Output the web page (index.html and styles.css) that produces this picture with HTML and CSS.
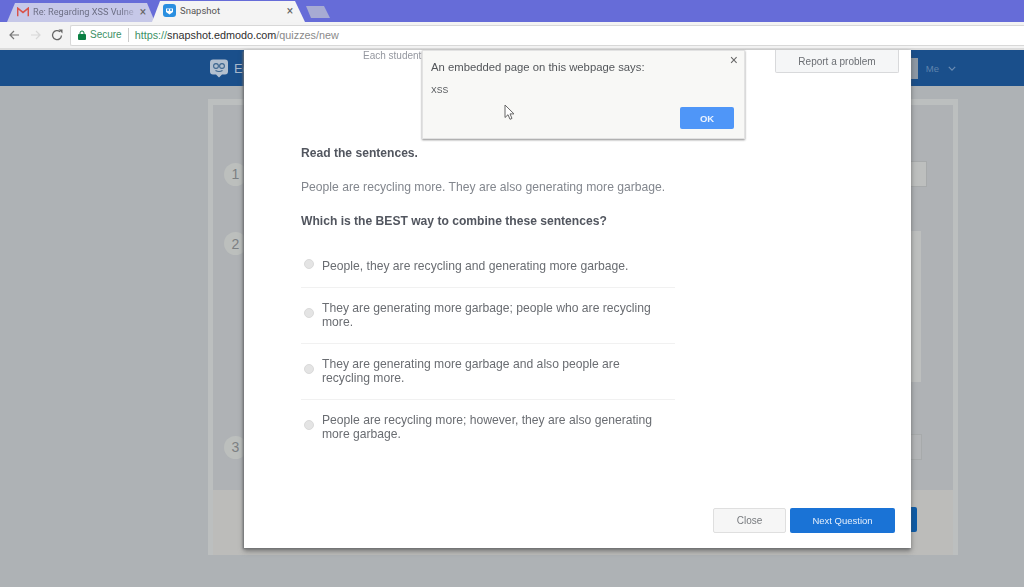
FILE: index.html
```html
<!DOCTYPE html>
<html lang="en">
<head>
<meta charset="utf-8">
<title>Snapshot</title>
<link rel="stylesheet" href="styles.css">
</head>
<body>
<div class="frame">
  <div class="tabs">
    <div class="tab tab-mail">
      <svg class="fav" viewBox="0 0 14 11" width="12" height="10"><path d="M0.8 10.500V1L7 6l6.200-5v9.500" fill="none" stroke="#d9534a" stroke-width="1.800"/></svg>
      <span class="tab-title">Re: Regarding XSS Vulne</span>
      <span class="tab-x">×</span>
    </div>
    <div class="tab tab-active">
      <svg class="fav" viewBox="0 0 13 13" width="13" height="13"><rect width="13" height="13" rx="3" fill="#2a8fe0"/><path d="M3 4.500h7v3.500l-3.500 2.500L3 8z" fill="#fff"/><circle cx="5" cy="6" r="1" fill="#2a8fe0"/><circle cx="8" cy="6" r="1" fill="#2a8fe0"/></svg>
      <span class="tab-title">Snapshot</span>
      <span class="tab-x">×</span>
    </div>
    <div class="tab-new"></div>
  </div>
  <div class="toolbar">
    <svg class="nav" viewBox="0 0 12 12" width="12" height="12"><path d="M11 6H2M6 2L2 6l4 4" fill="none" stroke="#777" stroke-width="1.200"/></svg>
    <svg class="nav" viewBox="0 0 12 12" width="12" height="12"><path d="M1 6h9M6 2l4 4-4 4" fill="none" stroke="#d8d8d8" stroke-width="1.200"/></svg>
    <svg class="nav" viewBox="0 0 12 12" width="12" height="12"><path d="M10.500 6.500A4.500 4.500 0 1 1 9 2.800" fill="none" stroke="#666" stroke-width="1.300"/><path d="M7.500 0.500h4v4z" fill="#666"/></svg>
    <div class="urlbar">
      <svg class="lock" viewBox="0 0 8 10" width="8" height="10"><path d="M2 4.500V3a2 2 0 0 1 4 0v1.500" fill="none" stroke="#0b8043" stroke-width="1"/><rect y="4" width="8" height="6" rx="1" fill="#0b8043"/></svg>
      <span class="secure">Secure</span>
      <span class="url"><span class="url-scheme">https://</span>snapshot.edmodo.com<span class="url-path">/quizzes/new</span></span>
    </div>
  </div>
  <div class="page">
    <header class="site-header">
      <div class="brand">
        <svg viewBox="0 0 20 20" width="20" height="21"><path d="M4 1h12a3 3 0 0 1 3 3v9a3 3 0 0 1-3 3h-3l-3 3-3-3H4a3 3 0 0 1-3-3V4a3 3 0 0 1 3-3z" fill="#b3c0cf"/><circle cx="7" cy="7.500" r="2.400" fill="none" stroke="#3d668f" stroke-width="1.100"/><circle cx="13" cy="7.500" r="2.400" fill="none" stroke="#3d668f" stroke-width="1.100"/><path d="M6.500 12q3.500 2 7 0" fill="none" stroke="#3d668f" stroke-width="1.100"/></svg>
        <span class="brand-name">Edmodo</span>
      </div>
      <div class="account">
        <span class="avatar"></span>
        <span class="me">Me</span>
        <svg viewBox="0 0 10 6" width="8" height="5"><path d="M1 1l4 4 4-4" fill="none" stroke="#6c8db3" stroke-width="1.500"/></svg>
      </div>
    </header>
    <main class="card">
      <div class="panel">
        <div class="step step-one"><span class="num">1</span><span class="field"></span></div>
        <div class="step step-two"><span class="num">2</span><span class="field field-tall"></span></div>
        <div class="step step-three"><span class="num">3</span><span class="field field-outline"></span></div>
      </div>
      <div class="card-foot"><span class="foot-btn"></span></div>
    </main>

    <section class="modal">
      <div class="modal-top">
        <span class="each">Each student</span>
        <button class="report">Report a problem</button>
      </div>
      <div class="quiz">
        <p class="q-strong">Read the sentences.</p>
        <p class="q-text">People are recycling more. They are also generating more garbage.</p>
        <p class="q-strong q-ask">Which is the BEST way to combine these sentences?</p>
        <ul class="options">
          <li class="option option-first"><span class="radio"></span><span class="opt-text">People, they are recycling and generating more garbage.</span></li>
          <li class="option"><span class="radio"></span><span class="opt-text">They are generating more garbage; people who are recycling more.</span></li>
          <li class="option"><span class="radio"></span><span class="opt-text">They are generating more garbage and also people are recycling more.</span></li>
          <li class="option"><span class="radio"></span><span class="opt-text">People are recycling more; however, they are also generating more garbage.</span></li>
        </ul>
      </div>
      <div class="modal-foot">
        <button class="btn-close">Close</button>
        <button class="btn-next">Next Question</button>
      </div>
    </section>

    <section class="alert">
      <span class="alert-x">×</span>
      <p class="alert-title">An embedded page on this webpage says:</p>
      <p class="alert-msg">XSS</p>
      <div class="alert-foot"><button class="alert-ok">OK</button></div>
    </section>
    <svg class="cursor" viewBox="0 0 12 18" width="12" height="18"><path d="M1 1v12.500l3-2.800 2 4.600 2-.9-2-4.500h4z" fill="#fff" stroke="#666" stroke-width="1"/></svg>
  </div>
</div>
</body>
</html>
```
FILE: styles.css
```css
* { box-sizing: border-box; }
html, body { margin: 0; height: 100%; overflow: hidden; }
body { font-family: "Liberation Sans", Arial, sans-serif; background: #aeb2b5; }
p { margin: 0; }
button { font-family: inherit; cursor: default; }

.frame { width: 1024px; height: 587px; display: flex; flex-direction: column; filter: blur(0.55px); }

.tabs { height: 22px; flex: none; background: #666cd8; display: flex; align-items: flex-end; position: relative; padding-left: 7px; }
.tab { display: flex; align-items: center; font-family: Roboto, "Liberation Sans", sans-serif; font-size: 9.500px; color: #555; }
.tab-mail { width: 148px; height: 19px; background: #c6c8e8; padding: 0 0 2px 10px; clip-path: polygon(0 100%, 8px 0, 140px 0, 148px 100%); color: #6d6f85; font-size: 9.200px; }
.tab-active { width: 153px; height: 21px; margin-left: -3px; background: #f4f4f4; padding: 0 9px 2px 11px; clip-path: polygon(0 100%, 8px 0, 143px 0, 153px 100%); }
.fav { flex: none; margin-right: 4px; }
.tab-title { white-space: nowrap; flex: 1; }
.tab-mail .tab-title { -webkit-mask-image: linear-gradient(90deg, #000 85%, transparent 102%); mask-image: linear-gradient(90deg, #000 85%, transparent 102%); }
.tab-mail .tab-x { margin-right: 6px; }
.tab-x { font-size: 12px; line-height: 12px; color: #666; width: 12px; text-align: center; flex: none; }
.tab-new { width: 24px; height: 12px; margin: 0 0 4px 1px; background: #a7abd3; clip-path: polygon(0 0, 18px 0, 24px 100%, 5px 100%); }

.toolbar { height: 28px; flex: none; background: #f3f3f3; border-bottom: 2px solid #dcdcdc; display: flex; align-items: center; padding-left: 8px; }
.nav { flex: none; margin-right: 10px; }
.nav:nth-child(2) { margin-right: 9px; }
.nav:nth-child(3) { margin-right: 7px; }
.urlbar { flex: 1; height: 21px; background: #fff; border: 1px solid #d8d8d8; border-right: 0; border-radius: 2px 0 0 2px; display: flex; align-items: center; padding-left: 7px; font-size: 10.800px; }
.lock { flex: none; margin-right: 4px; }
.secure { color: #3d9166; font-size: 10px; padding-right: 6px; margin-right: 6px; border-right: 1px solid #ccc; line-height: 14px; }
.url { color: #2f2f2f; }
.url-scheme { color: #3d9166; }
.url-path { color: #8a8a8a; }

.page { flex: 1; position: relative; display: flex; flex-direction: column; }
.site-header { height: 36px; flex: none; background: #1a4f8b; display: flex; align-items: center; justify-content: space-between; padding: 0 68px 0 209px; }
.brand { display: flex; align-items: center; gap: 5px; color: #a8b8cb; font-size: 13px; }
.account { display: flex; align-items: center; gap: 9px; font-size: 9.500px; color: #5f84ad; }
.avatar { width: 7px; height: 21px; background: #8e99a5; margin-right: -1px; }

.card { margin: 13px 66px 0 208px; height: 456px; background: #bcbfbf; border: 5px solid #bcbfbf; border-width: 6px 5px 0; display: flex; flex-direction: column; }
.panel { height: 385px; background: #afb2b5; display: flex; flex-direction: column; padding: 56px 26px 0 11px; }
.step { display: flex; align-items: center; justify-content: space-between; }
.num { width: 23px; height: 23px; border-radius: 50%; background: #bcbfbd; color: #7c8083; font-size: 14px; display: flex; align-items: center; justify-content: center; }
.field { width: 100px; height: 26px; background: #bdbfbe; border: 1px solid #a7aaab; }
.step-two { margin-top: 44px; align-items: flex-start; padding-right: 6px; }
.step-two .num { margin-top: 1px; }
.field-tall { height: 151px; border: 0; }
.step-three { margin-top: 52px; padding-right: 5px; }
.field-outline { background: #b3b5b7; }
.card-foot { flex: 1; display: flex; justify-content: flex-end; padding: 17px 36px 0 0; background: #bcbcba; }
.foot-btn { width: 100px; height: 25px; background: #0d5ca8; border-radius: 2px; }

.modal { position: absolute; left: 244px; top: 0; width: 667px; height: 498px; background: #fff; box-shadow: -1px 1px 2px #6e7073, 0 3px 5px rgba(60, 60, 60, .55); display: flex; flex-direction: column; }
.modal-top { height: 23px; flex: none; display: flex; justify-content: space-between; padding: 0 12px 0 119px; }
.each { font-size: 10px; color: #94979f; }
.report { width: 124px; height: 23px; background: #f5f6f7; border: 1px solid #d8d9db; border-top: 0; border-radius: 0 0 2px 2px; font-size: 10px; color: #6b6e73; padding: 0; }
.quiz { padding: 73px 0 0 57px; flex: 1; }
.q-strong { font-size: 12.100px; line-height: 14px; font-weight: 700; color: #52565f; }
.q-text { font-size: 12.150px; line-height: 14px; color: #83878e; margin-top: 20px; }
.q-ask { margin-top: 20px; }
.options { list-style: none; margin: 18px 0 0; padding: 0; width: 374px; }
.option { display: flex; align-items: center; padding: 13px 0 14px; border-bottom: 1px solid #f1f1f1; }
.option:last-child { border-bottom: 0; }
.radio { flex: none; width: 10px; height: 10px; border-radius: 50%; background: #e4e4e4; border: 1px solid #dadada; margin: -4px 8px 0 3px; }
.opt-text { font-size: 12.150px; line-height: 14px; color: #6a6d72; max-width: 340px; }
.modal-foot { flex: none; display: flex; justify-content: flex-end; gap: 4px; padding: 0 16px 15px 0; }
.btn-close { width: 73px; height: 25px; background: #f6f6f6; border: 1px solid #dfdfdf; border-radius: 2px; font-size: 10px; color: #777a7e; padding: 0; }
.btn-next { width: 105px; height: 25px; background: #1a73d6; border: 0; border-radius: 2px; font-size: 9.500px; color: #e4eefb; padding: 0; }

.alert { position: absolute; left: 422px; top: 0; width: 323px; height: 89px; background: #f8f8f6; border: 1px solid #e2e2e2; box-shadow: 0 1px 2px #8d8d8d; padding: 10px 0 0 8px; }
.alert-x { position: absolute; right: 6px; top: 2px; font-size: 14px; color: #666; line-height: 14px; }
.alert-title { font-size: 11.300px; line-height: 13px; color: #53565a; }
.alert-msg { font-size: 8.600px; line-height: 11px; color: #53565a; margin-top: 11px; }
.alert-foot { display: flex; justify-content: flex-end; padding: 11px 10px 0 0; }
.alert-ok { width: 54px; height: 22px; background: #4f96f8; border: 0; border-radius: 2px; font-size: 9.500px; font-weight: 700; color: #eaf2fe; padding: 0; }
.cursor { position: absolute; left: 504px; top: 54px; }
```
